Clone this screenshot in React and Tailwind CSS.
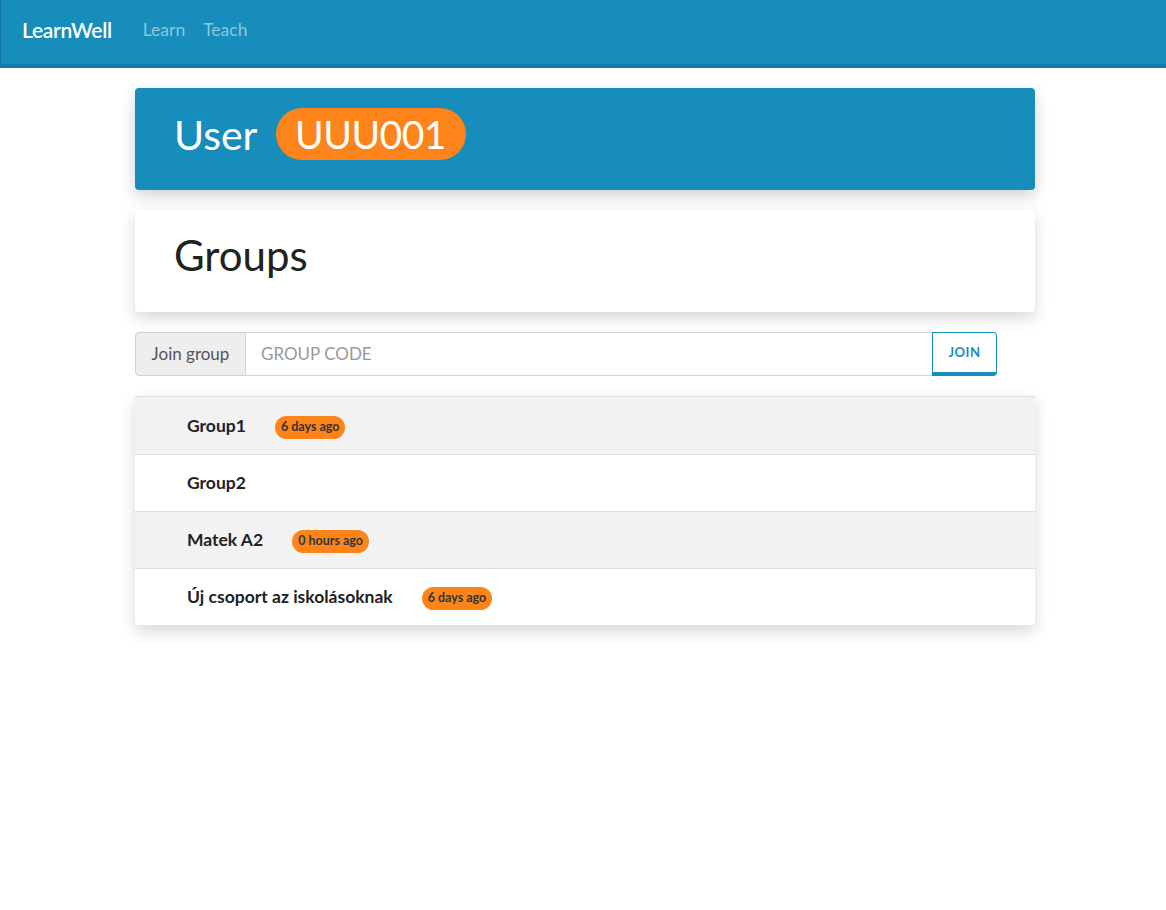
import React from 'react';

const groups = [
  { name: 'Group1', badge: '6 days ago' },
  { name: 'Group2', badge: null },
  { name: 'Matek A2', badge: '0 hours ago' },
  { name: 'Új csoport az iskolásoknak', badge: '6 days ago' },
];

export default function App() {
  return (
    <div className="min-h-screen bg-white font-['Lato','Noto_Sans',sans-serif]">
      {/* Navbar */}
      <nav className="h-[68px] bg-[#178dbc] border-b-4 border-l border-[#1479a3] flex items-center px-[21px] pb-[4px]">
        <span className="text-white text-[21px] font-semibold tracking-[-0.3px]">LearnWell</span>
        <div className="flex gap-[18px] ml-[31px]">
          <a className="text-[#8cc6df] text-[17.5px]">Learn</a>
          <a className="text-[#8cc6df] text-[17.5px]">Teach</a>
        </div>
      </nav>

      <div className="w-[900px] ml-[135px] pt-[20px]">
        {/* User header */}
        <div className="bg-[#178dbc] rounded-[4px] h-[102px] flex items-center px-[39px] pb-[10px] shadow-[0_6px_16px_rgba(0,0,0,0.18)]">
          <span className="text-white text-[41px] leading-none">User</span>
          <span className="ml-[18px] bg-[#fd841a] text-white text-[39px] leading-none rounded-full h-[52px] w-[190px] flex items-center justify-center tracking-[-0.5px]">UUU001</span>
        </div>

        {/* Groups card */}
        <div className="mt-[20px] bg-white rounded-[4px] h-[102px] flex items-center px-[39px] pb-[12px] shadow-[0_6px_16px_rgba(0,0,0,0.16)]">
          <h1 className="text-[#222] text-[42px] leading-none">Groups</h1>
        </div>

        {/* Join group */}
        <div className="mt-[20px] flex w-[862px] h-[44px]">
          <div className="bg-[#eeeeee] border border-[#ccd3da] rounded-l-[4px] w-[111px] flex items-center justify-center text-[#555] text-[17px]">
            Join group
          </div>
          <input
            placeholder="GROUP CODE"
            className="flex-1 border-y border-[#ccd3da] px-[15px] text-[17px] placeholder:text-[#999] outline-none"
          />
          <button className="w-[65px] border border-[#178dbc] border-b-4 rounded-r-[4px] bg-white text-[#178dbc] text-[13px] font-bold tracking-[0.5px]">
            JOIN
          </button>
        </div>

        {/* Group list */}
        <div className="mt-[20px] rounded-b-[4px] shadow-[0_6px_16px_rgba(0,0,0,0.16)] border-t border-[#dddddd] overflow-hidden">
          {groups.map((g, i) => (
            <div
              key={g.name}
              className={`h-[57px] flex items-center pl-[52px] pt-[1px] ${i > 0 ? 'border-t border-[#dddddd]' : ''} ${i % 2 === 0 ? 'bg-[#f2f2f2]' : 'bg-white'}`}
            >
              <span className="text-[#222] text-[17.5px] font-bold">{g.name}</span>
              {g.badge && (
                <span className="ml-[29px] mt-[2px] bg-[#fd841a] text-[#333] text-[12.5px] font-bold rounded-full px-[6px] h-[23px] flex items-center">
                  {g.badge}
                </span>
              )}
            </div>
          ))}
        </div>
      </div>
    </div>
  );
}
